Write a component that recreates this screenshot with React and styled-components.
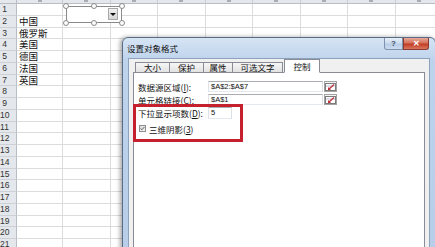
import React from "react";
import styled, { createGlobalStyle } from "styled-components";

const GlobalStyle = createGlobalStyle`
    html, body {
        margin: 0;
        padding: 0;
        background: #fff;
    }
    body {
        width: 435px;
        height: 247px;
        overflow: hidden;
        font-family: "Noto Sans CJK SC", "Liberation Sans", sans-serif;
    }
    * { box-sizing: border-box; }
`;

const Page = styled.div`
    position: relative;
    width: 435px;
    height: 247px;
    overflow: hidden;
    background: #fff;
`;

/* ---------- spreadsheet ---------- */

const Sheet = styled.div`
    display: grid;
    grid-template-columns: 17px 46px repeat(8, 47.5px);
    grid-template-rows: 4px repeat(21, 11.75px);
`;

const Corner = styled.div`
    background: #e4e7eb;
    border-right: 1px solid #b9bec6;
    border-bottom: 1px solid #b9bec6;
`;

const ColHead = styled.div`
    background: #e4e7eb;
    border-right: 1px solid #c9cdd3;
    border-bottom: 1px solid #b9bec6;
    display: flex;
    justify-content: center;

    &::after {
        content: "";
        width: 4px;
        height: 2px;
        background: #a8adb4;
    }
`;

const RowHead = styled.div`
    background: #e4e7eb;
    border-right: 1px solid #b9bec6;
    border-bottom: 1px solid #cdd1d6;
    font-family: "Liberation Sans", sans-serif;
    font-size: 8.5px;
    line-height: 11px;
    padding-right: 7px;
    text-align: center;
    color: #333;
`;

const Cell = styled.div`
    border-right: 1px solid #dadcdd;
    border-bottom: 1px solid #dadcdd;
    font-size: 9.5px;
    line-height: 11px;
    padding-left: 2px;
    white-space: nowrap;
    color: #111;
`;

const ComboBox = styled.div`
    position: absolute;
    left: 66px;
    top: 6px;
    width: 56px;
    height: 17px;
    border: 1px solid #8a8a8a;
    background: #fff;
`;

const ComboArrow = styled.div`
    position: absolute;
    right: 3px;
    top: 1px;
    width: 10px;
    height: 12px;
    background: linear-gradient(180deg, #f0f0f0, #d6d6d6);
    border: 1px solid #a9a9a9;
    display: flex;
    align-items: center;
    justify-content: center;

    &::after {
        content: "";
        border-left: 3px solid transparent;
        border-right: 3px solid transparent;
        border-top: 3px solid #111;
    }
`;

const Handle = styled.div`
    position: absolute;
    left: ${(p) => p.$x - 3}px;
    top: ${(p) => p.$y - 3}px;
    width: 6px;
    height: 6px;
    border-radius: 50%;
    background: #fff;
    border: 1px solid #8a8a8a;
`;

/* ---------- dialog ---------- */

const Window = styled.div`
    position: absolute;
    left: 122px;
    top: 37px;
    width: 314px;
    height: 232px;
    border: 1px solid #5a6c84;
    border-radius: 6px 6px 0 0;
    background: linear-gradient(180deg, #d6e4f4 0px, #bed3ec 22px, #b7cde8 100%);
    padding: 0 5px;
    display: flex;
    flex-direction: column;
    box-shadow: -2px 0 4px rgba(0, 0, 0, 0.35);
`;

const TitleBar = styled.div`
    height: 20px;
    display: flex;
    justify-content: space-between;
    align-items: flex-start;
`;

const Title = styled.div`
    align-self: center;
    margin-left: -1px;
    font-size: 8.5px;
    line-height: 10px;
    color: #111;
`;

const Caption = styled.div`
    display: flex;
    margin-right: 1px;
`;

const CapButton = styled.div`
    width: ${(p) => p.$w}px;
    height: 12px;
    border: 1px solid ${(p) => (p.$close ? "#8a3a32" : "#7d93ad")};
    border-top: none;
    border-radius: ${(p) => (p.$close ? "0 0 3px 0" : "0 0 0 3px")};
    background: ${(p) =>
        p.$close
            ? "linear-gradient(180deg, #e9a99a 0%, #d4705c 45%, #c23c23 55%, #d8775f 100%)"
            : "linear-gradient(180deg, #e6eef8 0%, #cddcee 45%, #b8cce6 55%, #cbdcf0 100%)"};
    color: ${(p) => (p.$close ? "#fff" : "#3b4d66")};
    font-family: "Liberation Sans", sans-serif;
    font-weight: bold;
    font-size: 8px;
    line-height: 11px;
    text-align: center;
`;

const Client = styled.div`
    flex: 1;
    background: #f0f0f0;
    border: 1px solid #8da2bd;
    border-bottom: none;
    padding: 0 4px 0 4px;
    display: flex;
    flex-direction: column;
`;

const TabRow = styled.div`
    height: 14px;
    display: flex;
    align-items: flex-end;
    padding-left: 2px;
    margin-bottom: -1px;
    position: relative;
    z-index: 1;
`;

const Tab = styled.div`
    width: ${(p) => p.$w}px;
    height: ${(p) => (p.$active ? 14 : 11)}px;
    margin-left: ${(p) => (p.$active ? 1 : -1)}px;
    border: 1px solid #898c95;
    border-bottom: 1px solid ${(p) => (p.$active ? "#fff" : "#898c95")};
    background: ${(p) => (p.$active ? "#fff" : "linear-gradient(180deg, #f6f6f6, #e2e2e2)")};
    font-size: 8.5px;
    line-height: ${(p) => (p.$active ? 12 : 9)}px;
    text-align: center;
    color: #111;

    &:first-child {
        margin-left: 0;
    }
`;

const Panel = styled.div`
    position: relative;
    flex: 1;
    background: #fff;
    border: 1px solid #898c95;
    padding: 8px 0 0 4px;
    display: flex;
    flex-direction: column;
`;

const FieldRow = styled.div`
    display: flex;
    align-items: center;
    height: ${(p) => p.$h || 11}px;
    margin-top: ${(p) => p.$gap || 0}px;
`;

const Label = styled.div`
    width: 70px;
    font-size: 8.5px;
    line-height: 10px;
    white-space: nowrap;
    color: #111;

    u {
        text-decoration: underline;
    }
`;

const TextBox = styled.div`
    width: ${(p) => p.$w}px;
    height: 100%;
    border: 1px solid #abadb3;
    border-color: #abadb3 #dbdfe6 #e3e9ef #e2e3ea;
    background: #fff;
    font-family: "Liberation Sans", sans-serif;
    font-size: 7.5px;
    line-height: 9px;
    padding-left: 2px;
    color: #111;
`;

const RefButton = styled.div`
    width: 13px;
    height: 11px;
    margin-left: 1px;
    border: 1px solid #a3a3a3;
    background: linear-gradient(180deg, #f5f5f5, #dcdcdc);
    display: flex;
    align-items: center;
    justify-content: center;
`;

const CheckBox = styled.div`
    width: 7px;
    height: 7px;
    margin-left: 1px;
    border: 1px solid #8e8f8f;
    background: linear-gradient(135deg, #dcdcdc, #f4f4f4);
    display: flex;
    align-items: center;
    justify-content: center;
`;

const CheckText = styled.div`
    margin-left: 3px;
    font-size: 8.5px;
    line-height: 10px;
    color: #111;
`;

const Highlight = styled.div`
    position: absolute;
    left: -1px;
    top: 31px;
    width: 110px;
    height: 38px;
    border: 3px solid #c5202e;
`;

function RefIcon() {
    return (
        <svg width="11" height="8" viewBox="0 0 11 8">
            <rect x="0.5" y="0.5" width="10" height="7" fill="#fff" stroke="#7c7c7c" />
            <line x1="1" y1="3" x2="10" y2="3" stroke="#b6c2d2" />
            <path d="M9 1.5 L4 6" stroke="#c2303a" strokeWidth="1.3" />
            <path d="M3 4 L3 7 L6 7 Z" fill="#c2303a" />
        </svg>
    );
}

const cols = ["A", "B", "C", "D", "E", "F", "G", "H", "I"];
const countries = ["", "中国", "俄罗斯", "美国", "德国", "法国", "英国"];
const tabs = [
    { name: "大小", w: 35 },
    { name: "保护", w: 35 },
    { name: "属性", w: 30 },
    { name: "可选文字", w: 51 },
    { name: "控制", w: 36, active: true },
];

function App() {
    const rows = Array.from({ length: 21 }, (_, i) => i + 1);

    return (
        <Page>
            <GlobalStyle />
            <Sheet>
                <Corner />
                {cols.map((c) => (
                    <ColHead key={c} />
                ))}
                {rows.map((r) => (
                    <React.Fragment key={r}>
                        <RowHead>{r}</RowHead>
                        {cols.map((c, ci) => (
                            <Cell key={c}>{ci === 0 ? countries[r - 1] || "" : ""}</Cell>
                        ))}
                    </React.Fragment>
                ))}
            </Sheet>

            <ComboBox>
                <ComboArrow />
            </ComboBox>
            {[
                [66, 6],
                [94, 6],
                [122, 6],
                [66, 23],
                [94, 23],
                [122, 23],
            ].map(([x, y], i) => (
                <Handle key={i} $x={x} $y={y} />
            ))}

            <Window>
                <TitleBar>
                    <Title>设置对象格式</Title>
                    <Caption>
                        <CapButton $w={19}>?</CapButton>
                        <CapButton $w={26} $close>
                            ✕
                        </CapButton>
                    </Caption>
                </TitleBar>
                <Client>
                    <TabRow>
                        {tabs.map((t) => (
                            <Tab key={t.name} $w={t.w} $active={t.active}>
                                {t.name}
                            </Tab>
                        ))}
                    </TabRow>
                    <Panel>
                        <FieldRow>
                            <Label>
                                数据源区域(<u>I</u>):
                            </Label>
                            <TextBox $w={115}>$A$2:$A$7</TextBox>
                            <RefButton>
                                <RefIcon />
                            </RefButton>
                        </FieldRow>
                        <FieldRow $gap={2}>
                            <Label>
                                单元格链接(<u>C</u>):
                            </Label>
                            <TextBox $w={115}>$A$1</TextBox>
                            <RefButton>
                                <RefIcon />
                            </RefButton>
                        </FieldRow>
                        <FieldRow $gap={2} $h={12}>
                            <Label>
                                下拉显示项数(<u>D</u>):
                            </Label>
                            <TextBox $w={24}>5</TextBox>
                        </FieldRow>
                        <FieldRow $gap={5} $h={9}>
                            <CheckBox>
                                <svg width="6" height="5" viewBox="0 0 6 5">
                                    <path d="M0.6 2.4 L2.3 4 L5.4 0.6" stroke="#555" strokeWidth="1.1" fill="none" />
                                </svg>
                            </CheckBox>
                            <CheckText>
                                三维阴影(<u>3</u>)
                            </CheckText>
                        </FieldRow>
                        <Highlight />
                    </Panel>
                </Client>
            </Window>
        </Page>
    );
}

export default App;
